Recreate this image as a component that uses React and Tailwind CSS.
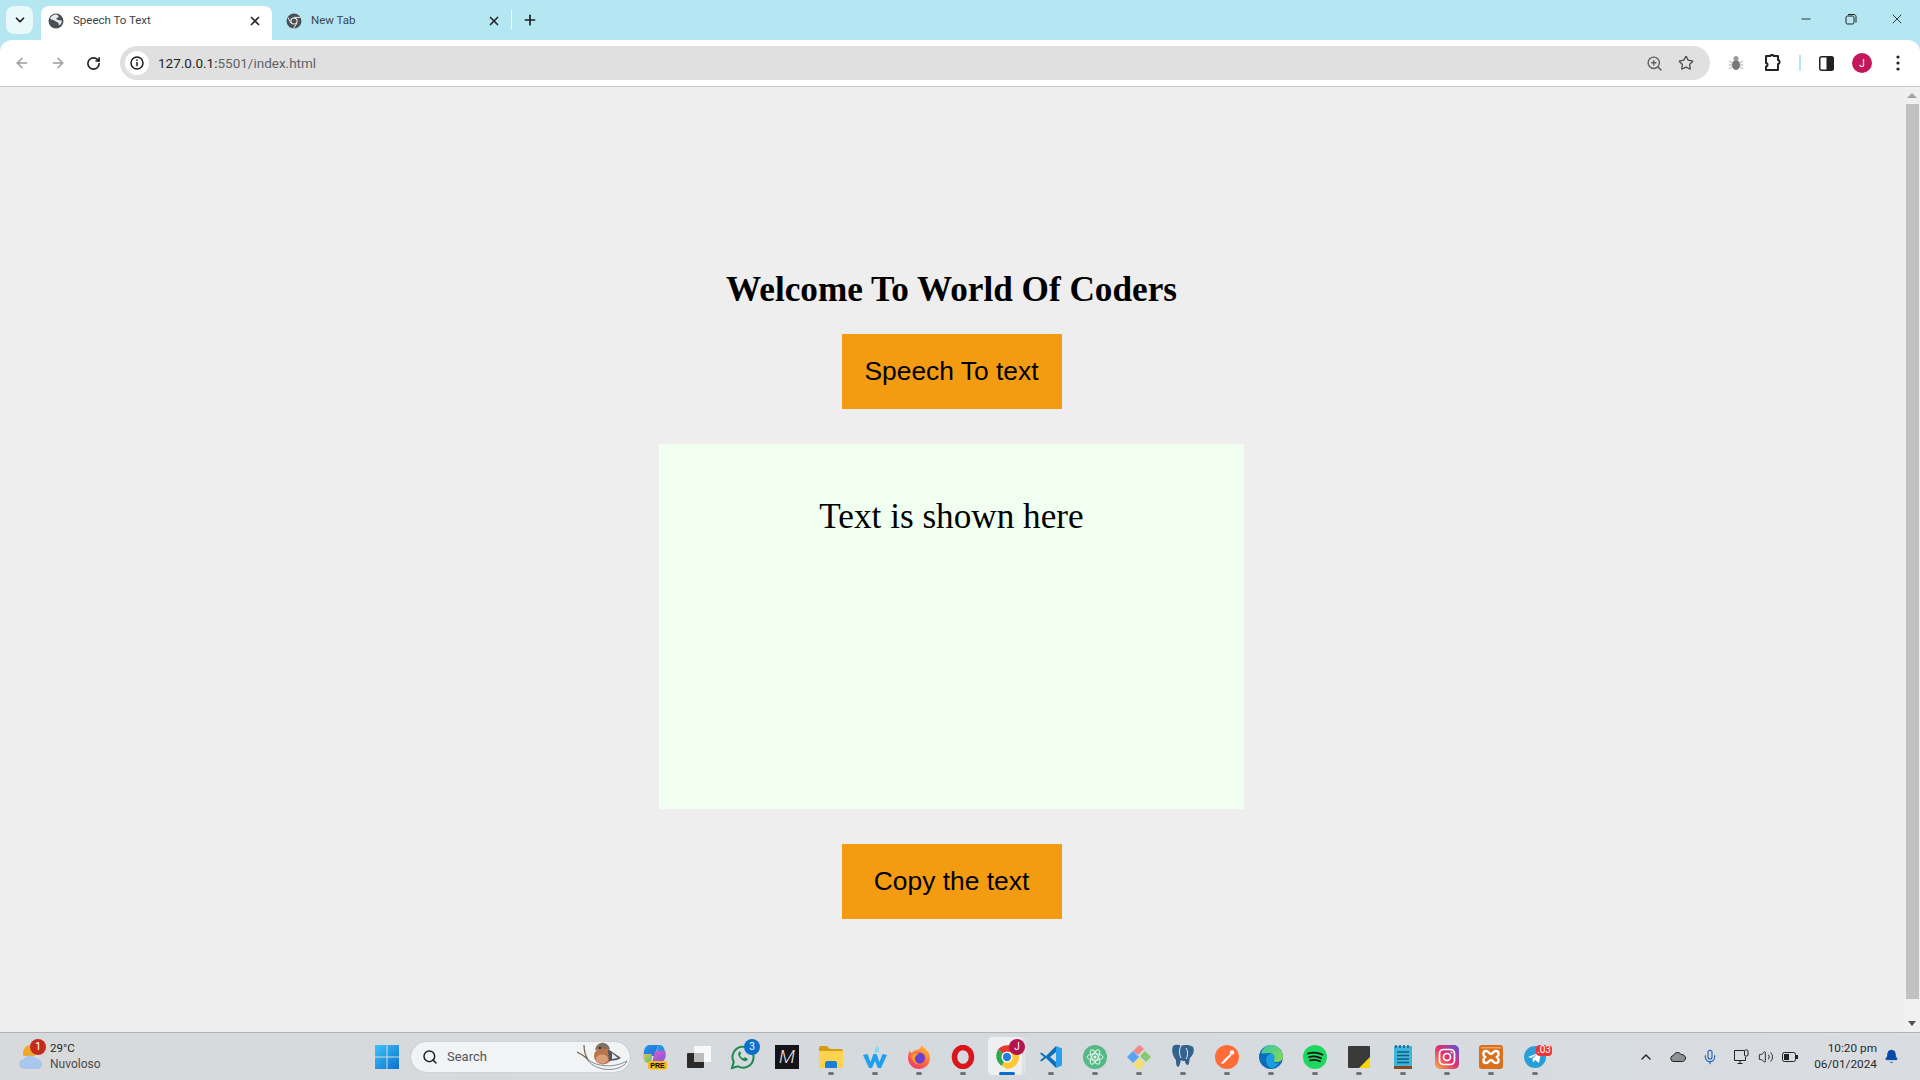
import React from "react";
import {
  ArrowLeft,
  ArrowRight,
  RotateCw,
  ZoomIn,
  Star,
  Plus,
  X,
  ChevronDown,
  ChevronUp,
  Minus,
  Search,
  Mic,
  Volume2,
  Bell,
} from "lucide-react";

const uiFont = "font-['Roboto','Noto_Sans',sans-serif]";

// Favicon globe for the active tab
const GlobeIcon = () => (
  <svg width="16" height="16" viewBox="0 0 16 16">
    <circle cx="8" cy="8" r="7.5" fill="#4a4f55" />
    <path d="M8 1.5c2 .4 3 1.4 2.6 2.4-.4 1-1.8.6-2.2 1.6-.3.9 1 1.2 1.9 1.4 1.2.3 2.5 0 3.6 1-.2 2-1.3 3.6-2.8 4.4-.6-.9-.3-2-1-2.7-.8-.8-2.300-.6-2.900-1.600C6 7 4.800 6.500 3.500 6.400 2.900 6.300 2.300 6 2 5.500 3 3.400 5.300 1.600 8 1.500z" fill="#e8eaed" />
  </svg>
);

const ChromeGray = () => (
  <svg width="16" height="16" viewBox="0 0 16 16">
    <circle cx="8" cy="8" r="7.5" fill="#4a4f55" />
    <circle cx="8" cy="8" r="3.600" fill="#fff" />
    <circle cx="8" cy="8" r="2.600" fill="#4a4f55" />
    <path d="M8 4.400h6.500M5 10l-3-5.500M10.800 10.300 7.500 15.400" stroke="#fff" strokeWidth="0.900" />
  </svg>
);

const WindowsLogo = () => (
  <svg width="24" height="24" viewBox="0 0 24 24">
    <defs>
      <linearGradient id="win" x1="0" y1="0" x2="1" y2="1">
        <stop offset="0" stopColor="#3fc5f8" />
        <stop offset="1" stopColor="#0a6fd0" />
      </linearGradient>
    </defs>
    <path d="M0 0h11.500v11.500H0zM12.500 0H24v11.500H12.500zM0 12.500h11.500V24H0zM12.500 12.500H24V24H12.500z" fill="url(#win)" />
  </svg>
);

// Bing picture in the search box: a finch on a snowy branch
const Bird = () => (
  <svg width="54" height="32" viewBox="0 0 54 32">
    <path d="M1 11c4 2 9 5 12 9M8 4c0 5 1 10 4 15" stroke="#6f5f4e" strokeWidth="1.200" fill="none" />
    <path d="M12 19c9 6 24 9 39 1-2 6-13 10-24 8-8-2-13-5-15-9z" fill="#f1f4f7" stroke="#5a5f66" strokeWidth="0.700" />
    <ellipse cx="27" cy="15" rx="9" ry="8.500" fill="#b9744a" />
    <ellipse cx="26" cy="18" rx="6" ry="4.500" fill="#d99f78" />
    <path d="M19 9c1-5 5-8 9-7 3 .5 5 3 6 6-4 0-9-1-15 1z" fill="#7f6f5f" />
    <path d="M32 8l13 9-4 2-8 1z" fill="#4e555e" />
    <path d="M36 12l6 5-6 1z" fill="#e5e9ee" />
    <circle cx="24" cy="7" r="0.900" fill="#111" />
  </svg>
);

const Copilot = () => (
  <svg width="26" height="26" viewBox="0 0 26 26">
    <defs>
      <linearGradient id="cpa" x1="0" y1="0" x2="1" y2="1">
        <stop offset="0" stopColor="#1f9ee8" />
        <stop offset="1" stopColor="#2c5fd8" />
      </linearGradient>
      <linearGradient id="cpb" x1="0" y1="0" x2="1" y2="1">
        <stop offset="0" stopColor="#e05fc0" />
        <stop offset="1" stopColor="#7a55e8" />
      </linearGradient>
      <linearGradient id="cpc" x1="0" y1="0" x2="1" y2="1">
        <stop offset="0" stopColor="#f0c040" />
        <stop offset="1" stopColor="#3fc48a" />
      </linearGradient>
    </defs>
    <path d="M7 1h9l-3 11H2C1 6 3 2 7 1z" fill="url(#cpa)" />
    <path d="M16 1h2c3 0 4 3 5 6h-8z" fill="#2f8fe5" />
    <path d="M1 10h9l-1 9H6c-3 0-5-4-5-9z" fill="url(#cpc)" />
    <path d="M13 7h10c2 4 0 11-5 12h-8z" fill="url(#cpb)" />
    <rect x="6" y="17" width="19" height="8.500" rx="2" fill="#f8bc10" />
    <text x="15.500" y="23.800" fontSize="7" fontWeight="700" textAnchor="middle" fontFamily="Liberation Sans">PRE</text>
  </svg>
);

const SquareApp = () => (
  <svg width="26" height="24" viewBox="0 0 26 24">
    <rect x="8" y="1" width="17" height="16" rx="1" fill="#f8f8f8" />
    <rect x="1" y="8" width="17" height="15" rx="1" fill="#2a2a2a" />
    <rect x="8" y="8" width="10" height="9" fill="#bdbdbd" />
  </svg>
);

const WhatsApp = () => (
  <svg width="26" height="26" viewBox="0 0 26 26">
    <path d="M2 24l1.700-6A10.500 10.500 0 1 1 8 22.400z" fill="none" stroke="#1d8a4f" strokeWidth="2" />
    <path d="M9 8c-1.500 1.500-.8 4 1.500 6.500s5 3.500 6.500 2c1-1 .8-1.800 0-2.200l-2-1c-.6-.2-1 .8-1.500 1-1 .1-3.300-2-3.500-3.300.2-.6 1.200-.9 1-1.600L10.500 8c-.4-.6-1-.5-1.500 0z" fill="#1d8a4f" />
  </svg>
);

const BlackM = () => (
  <div className="flex h-6 w-6 items-center justify-center bg-[#15131a] font-['Roboto',sans-serif] text-[19px] font-light italic leading-none text-[#e6e6e6]">
    M
  </div>
);

const Folder = () => (
  <svg width="24" height="24" viewBox="0 0 24 24">
    <path d="M0 3c0-1 .7-2 2-2h6l3 3h11c1 0 2 1 2 2v2H0z" fill="#d99b17" />
    <path d="M0 6h24v15c0 1-1 2-2 2H2c-1 0-2-1-2-2z" fill="#fbd34f" />
    <path d="M6 18c0-1 1-2 2-2h8c1 0 2 1 2 2v5H6z" fill="#1a80cf" />
  </svg>
);

const Windsurfish = () => (
  <svg width="26" height="24" viewBox="0 0 26 24">
    <path d="M1 10l4.500-1 3 8 3-8h3l3 8 3-8 4.500 1-6 13h-3l-3-7-3 7h-3z" fill="#1fa0ee" />
    <path d="M13 8c-1-3 1-6 3-7 0 2 2 3 1 5-1 1-3 3-4 2z" fill="#7fdcf5" />
  </svg>
);

const Firefox = () => (
  <svg width="24" height="24" viewBox="0 0 24 24">
    <defs>
      <linearGradient id="ffx" x1="0.800" y1="0" x2="0.200" y2="1">
        <stop offset="0" stopColor="#ffc22e" />
        <stop offset="0.500" stopColor="#ff7139" />
        <stop offset="1" stopColor="#f0366f" />
      </linearGradient>
    </defs>
    <path d="M15 0c1 3 8 5 8 13a11 11 0 0 1-22 0c0-3 1-6 2-8 0 2 1 3 2 3 1-2 3-3 5-3 2-1 4-2 5-5z" fill="url(#ffx)" />
    <circle cx="12.500" cy="13" r="5.500" fill="#6b3fd4" />
    <path d="M4 10c3-1 6-2 9-1-3 0-5 2-5 5 0 3 3 6 7 5-5 2-10-2-11-9z" fill="#ff9a2e" />
  </svg>
);

const Opera = () => (
  <svg width="24" height="24" viewBox="0 0 24 24">
    <ellipse cx="12" cy="12" rx="8.500" ry="9.500" fill="none" stroke="#d9161c" strokeWidth="5.500" />
  </svg>
);

const Chrome = () => (
  <svg width="24" height="24" viewBox="0 0 24 24">
    <path d="M12 12 3 4.500A12 12 0 0 1 23 7H12z" fill="#e33b2e" />
    <path d="M12 12l-5 9A12 12 0 0 1 3 4.500z" fill="#2da94f" />
    <path d="M12 7h11a12 12 0 0 1-11 17l-5-3z" fill="#fcc934" />
    <circle cx="12" cy="12" r="5.500" fill="#fff" />
    <circle cx="12" cy="12" r="4.200" fill="#2a7de1" />
  </svg>
);

const VSCode = () => (
  <svg width="24" height="24" viewBox="0 0 24 24">
    <path d="M17 1l6 2.500v17L17 23z" fill="#2aa0ea" />
    <path d="M17 1 7 11 2.500 7.500 1 8.500 5 12l-4 3.500 1.500 1L7 13l10 10v-6l-6-5 6-5z" fill="#0a70b8" />
  </svg>
);

const AtomApp = () => (
  <svg width="24" height="24" viewBox="0 0 24 24">
    <circle cx="12" cy="12" r="12" fill="#54b985" />
    <g fill="none" stroke="#e8f6ee" strokeWidth="1">
      <ellipse cx="12" cy="12" rx="8" ry="3.200" />
      <ellipse cx="12" cy="12" rx="8" ry="3.200" transform="rotate(60 12 12)" />
      <ellipse cx="12" cy="12" rx="8" ry="3.200" transform="rotate(120 12 12)" />
    </g>
    <circle cx="12" cy="12" r="1.500" fill="#e8f6ee" />
  </svg>
);

const DiamondApp = () => (
  <svg width="26" height="26" viewBox="0 0 26 26">
    <path d="M1 13l6-6 6 6-6 6z" fill="#5aa2f5" />
    <path d="M7 7l5-5c1-1 2-1 3 0l3 3-6 6z" fill="#f08a8a" />
    <path d="M14 12l5-5 6 6-5 5z" fill="#88c86e" />
    <path d="M7 20l6-6 6 6-5 5c-1 1-2 1-3 0z" fill="#f5de70" />
  </svg>
);

const Elephant = () => (
  <svg width="24" height="26" viewBox="0 0 24 26">
    <path d="M2 2c3-2 6-1 8 0 2-1 8-2 12 1 2 4 0 8-3 11-1 2 0 5-2 7-2 0-3-2-3-4-2 0-3 0-4-1-1 3-1 6-3 7-2-1-2-4-2-7C2 13 0 6 2 2z" fill="#33628f" />
    <path d="M10 2c-2 3-2 8 0 12M15 4c2 3 2 8 0 11" stroke="#fff" strokeWidth="0.900" fill="none" />
  </svg>
);

const Postman = () => (
  <svg width="24" height="24" viewBox="0 0 24 24">
    <circle cx="12" cy="12" r="12" fill="#ff6c37" />
    <path d="M6 18l9-9 1.500 1.500L8 19z" fill="#fff" />
    <circle cx="17" cy="7.500" r="2.200" fill="#fff" />
  </svg>
);

const Edge = () => (
  <svg width="24" height="24" viewBox="0 0 24 24">
    <defs>
      <linearGradient id="edge" x1="0" y1="0" x2="1" y2="1">
        <stop offset="0" stopColor="#37c9a8" />
        <stop offset="1" stopColor="#8ad84c" />
      </linearGradient>
    </defs>
    <circle cx="12" cy="12" r="12" fill="#0f6cbd" />
    <path d="M2 8C4 2 9 0 12 0c7 0 12 5 12 12 0 4-4 5-7 5-2 0-3-1-2-2 1-3-1-7-5-7-3 0-6 1-8 0z" fill="url(#edge)" />
    <path d="M7 14c0-3 3-5 6-5 3 0 3 3 2 6-1 2 1 4 5 3-2 3-5 5-8 5-3-1-5-5-5-9z" fill="#1b9de2" />
  </svg>
);

const Spotify = () => (
  <svg width="24" height="24" viewBox="0 0 24 24">
    <circle cx="12" cy="12" r="12" fill="#1ed760" />
    <path d="M5 8.500c5-1.500 10-1 14.500 1.200M6 12c4-1 8.500-.7 12 1.200M7 15.300c3.500-.8 7-.5 10 1" fill="none" stroke="#111" strokeWidth="1.800" strokeLinecap="round" />
  </svg>
);

const StickyNote = () => (
  <svg width="22" height="22" viewBox="0 0 22 22">
    <rect width="22" height="22" rx="1" fill="#3a3a3a" />
    <path d="M11 22 22 11v11z" fill="#ffd400" />
  </svg>
);

const Notepad = () => (
  <svg width="18" height="24" viewBox="0 0 18 24">
    <rect y="1" width="18" height="20" fill="#41b4dc" />
    <rect y="21" width="18" height="3" fill="#8a4b20" />
    <path d="M2 0v3M6 0v3M10 0v3M14 0v3" stroke="#15607e" strokeWidth="1.500" />
    <path d="M3 7h12M3 10.500h12M3 14h12M3 17.500h12" stroke="#0f5f80" strokeWidth="1.500" />
  </svg>
);

const Instagram = () => (
  <svg width="24" height="24" viewBox="0 0 24 24">
    <defs>
      <linearGradient id="ig" x1="0" y1="1" x2="1" y2="0">
        <stop offset="0" stopColor="#fcb045" />
        <stop offset="0.500" stopColor="#e1306c" />
        <stop offset="1" stopColor="#5b51d8" />
      </linearGradient>
    </defs>
    <rect width="24" height="24" rx="5" fill="url(#ig)" />
    <rect x="4.500" y="4.500" width="15" height="15" rx="4" fill="none" stroke="#fff" strokeWidth="1.700" />
    <circle cx="12" cy="12" r="3.500" fill="none" stroke="#fff" strokeWidth="1.700" />
    <circle cx="16.500" cy="7.500" r="1" fill="#fff" />
  </svg>
);

const Xampp = () => (
  <svg width="24" height="24" viewBox="0 0 24 24">
    <rect width="24" height="24" rx="3" fill="#d9701f" />
    <rect x="2" y="2" width="20" height="1.500" fill="#eea468" />
    <path d="M7 6c3 0 3 3 5 3s2-3 5-3 3.500 4 1 6c2.500 2 2 6-1 6s-3-3-5-3-2 3-5 3-3.500-4-1-6c-2.500-2-2-6 1-6z" fill="none" stroke="#fff" strokeWidth="2.400" />
  </svg>
);

const Telegram = () => (
  <svg width="22" height="22" viewBox="0 0 22 22">
    <circle cx="11" cy="11" r="11" fill="#2a9ed8" />
    <path d="M4 11l13-5-2 11-4-3-2 2.500-.5-4 5-4.500-6.500 4z" fill="#fff" />
  </svg>
);

const Dock = ({ children, dot = true, active = false }) => (
  <div className="relative flex h-[47px] w-11 items-center justify-center">
    {active && (
      <>
        <div className="absolute left-[7px] top-[4px] h-[38px] w-[34px] rounded bg-[#dfe1e3]" />
        <div className="absolute left-[3px] top-[4px] h-[38px] w-[34px] rounded bg-[#eeeff0]" />
      </>
    )}
    <div className="relative">{children}</div>
    {dot && !active && (
      <div className="absolute bottom-[5px] left-[19px] h-[3px] w-[6px] rounded-full bg-[#6f7276]" />
    )}
    {active && (
      <div className="absolute bottom-[5px] left-[14px] h-[3px] w-4 rounded-full bg-[#0a6cc9]" />
    )}
  </div>
);

const Badge = ({ className, children }) => (
  <div className={`absolute flex items-center justify-center font-['Roboto',sans-serif] text-[10px] leading-none text-white ${className}`}>
    {children}
  </div>
);

const TabStrip = () => (
  <div className={`flex h-10 items-end bg-[#b5e7f3] ${uiFont}`}>
    <div className="mb-[6px] ml-[6px] flex h-7 w-[27px] items-center justify-center rounded-lg bg-[#e9f8fb]">
      <ChevronDown size={14} strokeWidth={3} className="text-[#1f1f1f]" />
    </div>
    <div className="relative ml-[8px] flex h-[34px] w-[231px] items-center rounded-t-lg bg-white pb-[4px] pl-[7px] pr-[8px]">
      <GlobeIcon />
      <span className="ml-[9px] text-[11.5px] text-[#3c3f43]">Speech To Text</span>
      <X size={14} strokeWidth={3} className="ml-auto mr-[2px] text-[#2b2b2b]" />
    </div>
    <div className="flex h-[34px] w-[239px] items-center pb-[4px] pl-[14px] pr-[10px]">
      <ChromeGray />
      <span className="ml-[9px] text-[11.5px] text-[#3c4650]">New Tab</span>
      <X size={14} strokeWidth={3} className="ml-auto text-[#2b2b2b]" />
    </div>
    <div className="mb-[11px] h-[19px] w-[1px] bg-white" />
    <Plus size={16} strokeWidth={2.5} className="mb-[12px] ml-[10px] text-[#1f1f1f]" />
    <div className="mb-[13px] ml-auto flex items-center text-[#1f1f1f]">
      <Minus size={14} strokeWidth={1.5} />
      <svg className="ml-[32px]" width="12" height="12" viewBox="0 0 12 12" fill="none" stroke="#1f1f1f">
        <rect x="1" y="3" width="8" height="8" rx="1.500" />
        <path d="M3 1.500h6c1 0 2 1 2 2v6" />
      </svg>
      <X size={16} strokeWidth={1.3} className="ml-[32px] mr-[15px]" />
    </div>
  </div>
);

const Toolbar = () => (
  <div className={`flex h-[47px] items-center rounded-t-xl border-b border-[#c8c8c8] bg-white ${uiFont}`}>
    <ArrowLeft size={16} strokeWidth={2.2} className="ml-[14px] text-[#9a9a9a]" />
    <ArrowRight size={16} strokeWidth={2.2} className="ml-[20px] text-[#9a9a9a]" />
    <RotateCw size={15} strokeWidth={2.6} className="ml-[20px] text-[#1f1f1f]" />
    <div className="ml-[19px] flex h-[34px] w-[1590px] items-center rounded-full bg-[#e0e0e0] pl-[5px] pr-[16px]">
      <div className="flex h-6 w-6 items-center justify-center rounded-full bg-white">
        <svg width="14" height="14" viewBox="0 0 14 14">
          <circle cx="7" cy="7" r="6" fill="none" stroke="#1f1f1f" strokeWidth="1.500" />
          <path d="M7 6v4.200M7 3.600v1.300" stroke="#1f1f1f" strokeWidth="1.500" />
        </svg>
      </div>
      <span className="ml-[9px] text-[13.5px] text-[#5f6368]">
        <span className="text-[#1f1f1f]">127.0.0.1:</span>5501/index.html
      </span>
      <ZoomIn size={17} strokeWidth={2} className="ml-auto text-[#5f5f5f]" />
      <Star size={16} strokeWidth={2} className="ml-[15px] text-[#4f4f4f]" />
    </div>
    <svg className="ml-[18px]" width="16" height="16" viewBox="0 0 16 16">
      <ellipse cx="8" cy="10" rx="4" ry="5" fill="#777" />
      <circle cx="8" cy="3.500" r="2.500" fill="#999" />
      <path d="M1 6l3 2M15 6l-3 2M1 10h3M15 10h-3M1 14l3-2M15 14l-3-2" stroke="#aaa" />
    </svg>
    <svg className="ml-[20px]" width="18" height="18" viewBox="0 0 18 18" fill="none" stroke="#222" strokeWidth="2">
      <path d="M2 2h4.500c0-1.500 3-1.500 3 0H14v4c2 0 2 4 0 4v6H2v-3.500c2 0 2-3.500 0-3.500z" strokeLinejoin="round" />
    </svg>
    <div className="ml-[17px] h-[16px] w-[2px] bg-[#b5e7f3]" />
    <svg className="ml-[18px]" width="15" height="15" viewBox="0 0 15 15">
      <rect x="0.750" y="0.750" width="13.500" height="13.500" rx="2" fill="#fff" stroke="#222" strokeWidth="1.500" />
      <rect x="7.500" y="0.750" width="6.750" height="13.500" fill="#222" />
    </svg>
    <div className="ml-[18px] flex h-5 w-5 items-center justify-center rounded-full bg-[#c2185b] text-[10px] text-white">J</div>
    <svg className="ml-[24px]" width="4" height="16" viewBox="0 0 4 16" fill="#222">
      <circle cx="2" cy="2" r="1.600" />
      <circle cx="2" cy="8" r="1.600" />
      <circle cx="2" cy="14" r="1.600" />
    </svg>
  </div>
);

const Page = () => (
  <div className="flex h-[945px] bg-[#eeeeee]">
    <main className="flex flex-1 flex-col items-center pt-[183px] font-['Liberation_Sans',sans-serif] text-black">
      <h1 className="h-10 font-['Liberation_Serif',serif] text-[35.2px] font-bold leading-10">Welcome To World Of Coders</h1>
      <button className="mt-[24px] h-[75px] w-[220px] bg-[#f39c12] text-[26.4px]">Speech To text</button>
      <div className="mt-[35px] h-[365px] w-[585px] bg-[#f0fff0] pt-[53px] text-center font-['Liberation_Serif',serif] text-[35.2px] leading-10">
        Text is shown here
      </div>
      <button className="mt-[35px] h-[75px] w-[220px] bg-[#f39c12] text-[26.4px]">Copy the text</button>
    </main>
    {/* Scrollbar */}
    <div className="flex w-[17px] flex-col items-center bg-[#f0f0f0] pl-[1px]">
      <div className="mt-[6px] h-0 w-0 border-x-[5px] border-b-[5px] border-x-transparent border-b-[#a3a3a3]" />
      <div className="mt-[6px] h-[895px] w-[13px] bg-[#c1c1c1]" />
      <div className="mt-auto mb-[6px] h-0 w-0 border-x-[4px] border-t-[5px] border-x-transparent border-t-[#505050]" />
    </div>
  </div>
);

const Taskbar = () => (
  <div className={`flex h-12 items-center border-t border-[#b0b2b4] bg-gradient-to-r from-[#d8d9db] via-[#d5dade] to-[#d9dde1] ${uiFont}`}>
    {/* Weather */}
    <div className="relative ml-[19px] flex w-[356px] items-center">
      <svg width="24" height="28" viewBox="0 0 24 28">
        <path d="M12 2a8 8 0 0 0-8 8c0 1 .2 2 .5 3H16z" fill="#f0a828" />
        <path d="M5 26a5 5 0 0 1 0-10c1-4 9-5 11-1 4 0 7 3 7 6s-2 5-5 5z" fill="#a9c6ec" />
      </svg>
      <Badge className="left-[11px] top-[-1px] h-4 w-4 rounded-full bg-[#c42b1c] text-[11px]">1</Badge>
      <div className="ml-[7px] mb-[2px] leading-[16px]">
        <div className="text-[11.5px] text-[#1f1f1f]">29°C</div>
        <div className="text-[12px] text-[#4c4c4c]">Nuvoloso</div>
      </div>
    </div>
    <WindowsLogo />
    <div className="ml-[12px] mr-[3px] flex h-[30px] w-[219px] items-center rounded-full bg-[#f1f3f5] pl-[11px] shadow-[0_0_1px_#999]">
      <Search size={16} strokeWidth={2.2} className="text-[#1f1f1f]" />
      <span className="ml-[9px] text-[13px] text-[#555]">Search</span>
      <div className="ml-auto">
        <Bird />
      </div>
    </div>
    <Dock dot={false}><Copilot /></Dock>
    <Dock dot={false}><SquareApp /></Dock>
    <Dock dot={false}>
      <WhatsApp />
      <Badge className="left-[14px] top-[-5px] h-4 w-4 rounded-full bg-[#0a70c8]">3</Badge>
    </Dock>
    <Dock dot={false}><BlackM /></Dock>
    <Dock><Folder /></Dock>
    <Dock><Windsurfish /></Dock>
    <Dock><Firefox /></Dock>
    <Dock><Opera /></Dock>
    <Dock active>
      <Chrome />
      <Badge className="left-[14px] top-[-6px] h-4 w-4 rounded-full bg-[#b5134f]">J</Badge>
    </Dock>
    <Dock><VSCode /></Dock>
    <Dock><AtomApp /></Dock>
    <Dock><DiamondApp /></Dock>
    <Dock><Elephant /></Dock>
    <Dock><Postman /></Dock>
    <Dock><Edge /></Dock>
    <Dock><Spotify /></Dock>
    <Dock><StickyNote /></Dock>
    <Dock><Notepad /></Dock>
    <Dock><Instagram /></Dock>
    <Dock><Xampp /></Dock>
    <Dock>
      <Telegram />
      <Badge className="left-[12px] top-[-1px] h-[11px] w-4 rounded-sm bg-[#ee3338] text-[8px]">.03</Badge>
    </Dock>
    {/* Tray */}
    <ChevronUp size={16} strokeWidth={2} className="ml-[81px] text-[#1f1f1f]" />
    <svg className="ml-[16px]" width="16" height="11" viewBox="0 0 16 11">
      <path d="M4 10.500a3 3 0 0 1-.5-6C4.500 1 9.500.500 11 3.500c3-.3 4.500 2 4.500 3.500s-1 3.500-3 3.500z" fill="#8e9092" stroke="#222" />
    </svg>
    <Mic size={16} strokeWidth={1.7} className="ml-[16px] text-[#2563b5]" />
    <svg className="ml-[15px]" width="16" height="16" viewBox="0 0 16 16" fill="none" stroke="#222">
      <path d="M11 1.500H1.500v10h11V8M7 11.500v3M4.500 14.500h5" />
      <rect x="11.500" y="1" width="3.500" height="6" rx="1" />
    </svg>
    <Volume2 size={16} strokeWidth={1.4} className="ml-[9px] text-[#222]" />
    <svg className="ml-[8px]" width="16" height="10" viewBox="0 0 16 10">
      <rect x="0.500" y="0.500" width="13" height="9" rx="2" fill="none" stroke="#222" />
      <rect x="2" y="2" width="5" height="6" fill="#222" />
      <rect x="14" y="3" width="2" height="4" fill="#222" />
    </svg>
    <div className="ml-auto mb-[1px] text-right text-[11.8px] leading-[16px] text-[#2a2a2a]">
      <div>10:20 pm</div>
      <div>06/01/2024</div>
    </div>
    <Bell size={15} fill="#0a4aa8" strokeWidth={1.5} className="ml-[7px] mr-[21px] text-[#0a4aa8]" />
  </div>
);

export default function App() {
  return (
    <div className="h-screen overflow-hidden bg-[#b5e7f3]">
      <TabStrip />
      <Toolbar />
      <Page />
      <Taskbar />
    </div>
  );
}
